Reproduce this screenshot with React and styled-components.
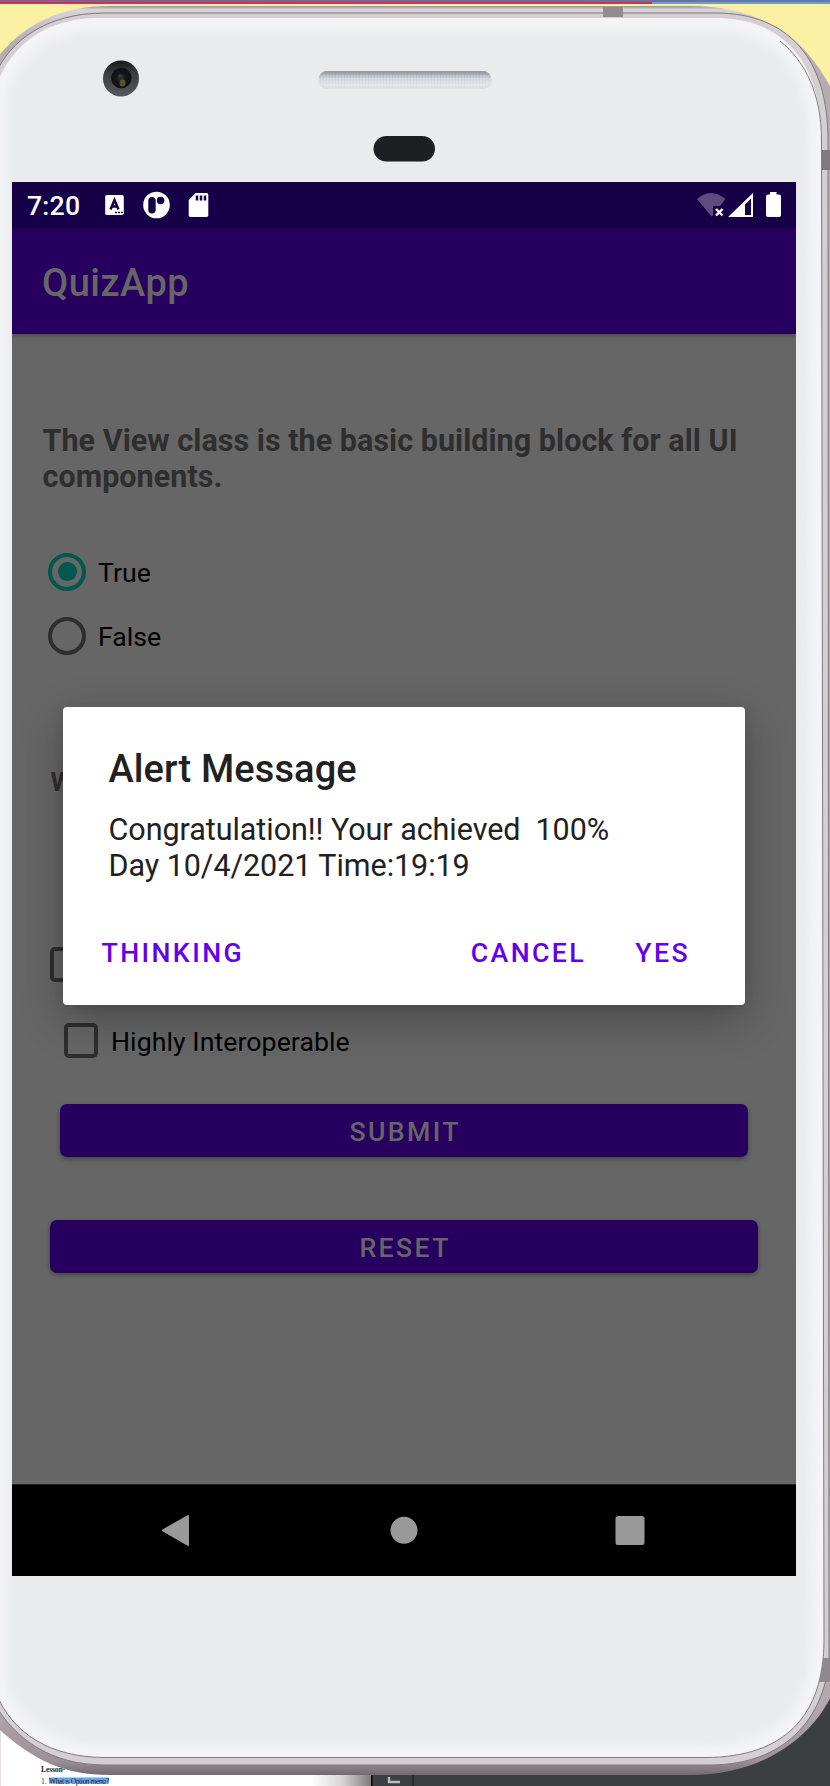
import React from "react";
import styled, { createGlobalStyle } from "styled-components";

const c = {
  purple: "#27005f",
  status: "#160048",
  dim: "#666666",
  hint: "#2e2e2e",
  teal: "#00584f",
  accent: "#6200ee",
  nav: "#999999",
};

const GlobalStyle = createGlobalStyle`
  * { box-sizing: border-box; }
  html, body { margin: 0; padding: 0; }
  body { width: 830px; height: 1786px; overflow: hidden; font-family: Roboto, "Liberation Sans", sans-serif; }
`;

const Stage = styled.main`
  position: relative;
  width: 830px;
  height: 1786px;
  overflow: hidden;
  padding: 182px 34px 210px 12px;
  background: #fcf1a3;
`;

const FrameArt = styled.svg`
  position: absolute;
  inset: 0;
  display: block;
`;

const Screen = styled.section`
  position: relative;
  display: flex;
  flex-direction: column;
  width: 784px;
  height: 1394px;
  overflow: hidden;
  background: ${c.dim};
`;

const StatusBar = styled.header`
  display: flex;
  align-items: center;
  height: 46px;
  padding: 0 15px 0 15px;
  background: ${c.status};
  color: #fff;
`;

const Clock = styled.span`
  width: 78px;
  padding-top: 1px;
  font-size: 26.7px;
  line-height: 32px;
  font-weight: 500;
  letter-spacing: 0.2px;
`;

const StatusIcons = styled.svg`
  display: block;
  margin-left: ${(p) => p.$push || "0"};
`;

const AppBar = styled.div`
  display: flex;
  align-items: center;
  flex: none;
  height: 106px;
  padding: 4px 30px 0;
  background: ${c.purple};
  color: ${c.dim};
  font-size: 38px;
  font-weight: 500;
  letter-spacing: 0.5px;
  box-shadow: 0 1px 5px rgba(0, 0, 0, 0.35);
`;

const Content = styled.div`
  flex: 1;
  display: flex;
  flex-direction: column;
  align-items: flex-start;
  padding-top: 88.5px;
`;

const Question = styled.p`
  margin: 0 0 0 ${(p) => p.$left}px;
  color: ${c.hint};
  font-size: ${(p) => p.$size}px;
  line-height: 36px;
  font-weight: 700;
  letter-spacing: 0.04px;
  white-space: pre-line;
`;

const RadioGroup = styled.div`
  display: flex;
  flex-direction: column;
  margin: 45px 0 0 36px;
`;

const Option = styled.label`
  display: flex;
  align-items: center;
  gap: ${(p) => p.$gap || 12}px;
  height: 64px;
  color: #000;
  font-size: 26.7px;
`;

const OptionText = styled.span`
  padding-top: 3px;
  letter-spacing: ${(p) => p.$spacing || 0}px;
`;

const RadioDot = styled.span`
  display: grid;
  place-items: center;
  width: 38px;
  height: 38px;
  border: 4px solid ${(p) => (p.$on ? c.teal : c.hint)};
  border-radius: 50%;

  &::after {
    content: "";
    width: 19px;
    height: 19px;
    border-radius: 50%;
    background: ${(p) => (p.$on ? c.teal : "transparent")};
  }
`;

const HiddenQuestion = styled.div`
  margin-top: 96px;
`;

const CheckList = styled.div`
  display: flex;
  flex-direction: column;
  margin-top: 133px;
  gap: 12px;
`;

const CheckRow = styled(Option)`
  margin-left: ${(p) => p.$left}px;
`;

const CheckBox = styled.span`
  width: 34.5px;
  height: 34.5px;
  border: 4px solid ${c.hint};
  border-radius: 5px;
`;

const Button = styled.button`
  display: block;
  width: ${(p) => p.$width}px;
  height: 53px;
  margin: ${(p) => p.$top}px 0 0 ${(p) => p.$left}px;
  padding: 4px 0 0 2.4px;
  border: 0;
  border-radius: 7px;
  background: ${c.purple};
  box-shadow: 0 2px 5px rgba(0, 0, 0, 0.35);
  color: ${c.dim};
  font: 500 26.7px Roboto, sans-serif;
  letter-spacing: 2.38px;
`;

const NavBar = styled.nav`
  flex: none;
  height: 92px;
  background: #000;
  border-top: 1px solid #222;
`;

const Dialog = styled.div`
  position: absolute;
  top: 525px;
  left: 50.5px;
  width: 682.5px;
  height: 298px;
  display: flex;
  flex-direction: column;
  padding: 40px 46px 0;
  border-radius: 4px;
  background: #fff;
  color: #212121;
  box-shadow: 0 14px 44px rgba(0, 0, 0, 0.28), 0 2px 10px rgba(0, 0, 0, 0.1);
`;

const DialogTitle = styled.h2`
  margin: 0;
  font-size: 38px;
  line-height: 45px;
  font-weight: 500;
  letter-spacing: 0.12px;
`;

const DialogText = styled.p`
  margin: 20px 0 0;
  font-size: 30.5px;
  line-height: 36px;
  letter-spacing: -0.05px;
  white-space: pre;
`;

const Actions = styled.div`
  display: flex;
  gap: 49px;
  margin: 53px 9px 0 -7px;
`;

const Action = styled.button`
  margin: 0 ${(p) => (p.$first ? "auto" : "0")} 0 0;
  padding: 0;
  border: 0;
  background: none;
  color: ${c.accent};
  font: 500 26.7px/32px Roboto, sans-serif;
  letter-spacing: 2.42px;
`;

const PaperText = styled.text`
  font-family: "Liberation Serif", serif;
  font-size: 7.6px;
  font-weight: ${(p) => p.$weight || 400};
`;

const outer =
  "M-20 84 C6 36 46 6 110 6 H690 C760 6 805 35 834 94 V1690 C815 1735 765 1775 690 1775 H110 C55 1775 25 1755 -20 1712 Z";
const rim =
  "M-4 73 C10 42 45 13 105 13 H715 C790 13 828 60 828 140 L829 1660 C824 1718 785 1765 710 1765 H105 C50 1765 15 1738 -4 1706 Z";
const face =
  "M-4 86 C12 45 45 18 100 18 H715 C785 18 821.5 65 821.5 140 L824 1640 C824 1715 785 1757.5 705 1757.5 H105 C50 1757.5 12 1733 -4 1693 Z";

function PhoneFrame() {
  return (
    <FrameArt width="830" height="1786" viewBox="0 0 830 1786" aria-hidden="true">
      <defs>
        <linearGradient id="metal" x1="0" y1="0" x2="0" y2="1">
          <stop offset="0" stopColor="#98929a" />
          <stop offset="0.002" stopColor="#d8d4d7" />
          <stop offset="0.02" stopColor="#b5adb0" />
          <stop offset="0.96" stopColor="#b3a9ad" />
          <stop offset="0.992" stopColor="#9b9196" />
          <stop offset="1" stopColor="#736a70" />
        </linearGradient>
        <linearGradient id="mesh" x1="0" y1="0" x2="0" y2="1">
          <stop offset="0" stopColor="#8d939b" />
          <stop offset="0.25" stopColor="#aab0b7" />
          <stop offset="0.5" stopColor="#cfd3d9" />
          <stop offset="1" stopColor="#e1e4e9" />
        </linearGradient>
        <linearGradient id="topline" x1="0" x2="1">
          <stop offset="0" stopColor="#8b5c87" />
          <stop offset="0.7" stopColor="#73689c" />
          <stop offset="1" stopColor="#617caf" />
        </linearGradient>
        <linearGradient id="paper" x1="0" x2="1">
          <stop offset="0" stopColor="#fff" />
          <stop offset="0.5" stopColor="#d8d6d6" />
          <stop offset="1" stopColor="#807c7d" />
        </linearGradient>
        <radialGradient id="lens">
          <stop offset="0" stopColor="#39371c" />
          <stop offset="0.5" stopColor="#14151b" />
          <stop offset="1" stopColor="#101112" />
        </radialGradient>
        <linearGradient id="camera" x1="0" y1="0" x2="0" y2="1">
          <stop offset="0" stopColor="#17191b" />
          <stop offset="0.35" stopColor="#3b3c3f" />
          <stop offset="1" stopColor="#58595c" />
        </linearGradient>
        <pattern id="dots" width="3" height="3" patternUnits="userSpaceOnUse">
          <path d="M0 0H1V3" fill="none" stroke="#fff" strokeOpacity="0.25" />
        </pattern>
        <filter id="glow" x="-10%" y="-10%" width="120%" height="120%">
          <feGaussianBlur stdDeviation="5" />
        </filter>
        <clipPath id="faceClip"><path d={face} /></clipPath>
      </defs>

      <rect width="830" height="2" fill="url(#topline)" />
      <rect y="2" width="652" height="2" fill="#c93357" />
      <rect x="652" y="2" width="178" height="2" fill="#68a2cb" />
      <rect y="1690" width="372" height="96" fill="#fff" />
      <rect y="1732" width="1" height="54" fill="#e5dfe1" />
      <rect x="312" y="1774" width="59" height="12" fill="url(#paper)" />
      <rect x="371" y="1640" width="459" height="146" fill="#3b3f41" />
      <rect x="371" y="1774" width="1.5" height="12" fill="#050505" />
      <rect x="412" y="1774" width="2" height="12" fill="#2a2c2d" />
      <path d="M389 1777V1782H400" fill="none" stroke="#b9bbbc" strokeWidth="2.4" />
      <rect x="49" y="1777.5" width="60" height="6" fill="#68a3e8" />
      <PaperText x="41" y="1772" $weight="700" textLength="24" fill="#222">Lesson-</PaperText>
      <PaperText x="41" y="1783.5" fill="#333">1.</PaperText>
      <PaperText x="49" y="1783.5" textLength="60" fill="#142b4d">What is Option menu?</PaperText>

      <path d={outer} fill="url(#metal)" />
      <path d={rim} fill="#d5cfd1" stroke="#817a7e" strokeWidth="1" />
      <rect x="603" y="7" width="20" height="10" fill="#938b90" />
      <rect x="822" y="150" width="8" height="20" fill="#81797e" />
      <path d="M823 1658H830V1682H818Z" fill="#91888d" />
      <path d={face} fill="#e9ebec" />
      <g clipPath="url(#faceClip)">
        <path d={face} fill="none" stroke="#f4f4f6" strokeWidth="25" filter="url(#glow)" />
      </g>
      <path d="M780 41C806 62 821.5 95 821.5 140L824 1640C824 1715 785 1757.5 705 1757.5H105C50 1757.5 12 1733 -4 1693" fill="none" stroke="#7e7b80" />

      <circle cx="121" cy="78.5" r="18" fill="url(#camera)" />
      <circle cx="121.3" cy="78" r="10.3" fill="url(#lens)" />
      <circle cx="120" cy="76" r="2" fill="#34335a" />
      <ellipse cx="122.5" cy="83" rx="3" ry="3.5" fill="#6c6a35" opacity="0.75" />
      <rect x="318" y="72" width="174" height="17" rx="8.5" fill="#dddfe3" />
      <rect x="319" y="71" width="172" height="15" rx="7.5" fill="url(#mesh)" />
      <rect x="319" y="75" width="172" height="11" rx="5.5" fill="url(#dots)" />
      <rect x="373.5" y="136" width="61.5" height="25.5" rx="12.75" fill="#1d1f22" />
    </FrameArt>
  );
}

function NotificationIcons() {
  return (
    <StatusIcons width="106" height="30" viewBox="105 190 106 30">
      <rect x="105.2" y="195" width="18.6" height="20" rx="1.8" fill="#fff" />
      <path d="M110.500 209.500L114.500 200L118.500 209.500M112.300 206.500H116.800" fill="none" stroke={c.status} strokeWidth="2.500" />
      <path d="M115 212.500H117M118 212.500H120M121 212.500H123" stroke={c.status} strokeWidth="1.700" />
      <circle cx="156.500" cy="205" r="13.300" fill="#fff" />
      <rect x="148.300" y="197" width="7.400" height="16.500" rx="3.700" fill={c.status} />
      <circle cx="160.600" cy="200.500" r="3.800" fill={c.status} />
      <path fill="#fff" d="M195.500 193H206.500a1.800 1.800 0 0 1 1.800 1.800V215.200a1.800 1.800 0 0 1-1.800 1.800H190.500a1.800 1.800 0 0 1-1.800-1.800V200Z" />
      <path d="M197 195.500V200.500M201 195.500V200.500M205 195.500V200.500" stroke={c.status} strokeWidth="2.500" />
    </StatusIcons>
  );
}

function SystemIcons() {
  return (
    <StatusIcons $push="auto" width="86" height="30" viewBox="695 190 86 30">
      <path fill="#5e4c80" d="M697 199Q711 187 725.500 199L720 206H713V215.500L711.500 216.500Z" />
      <path d="M716 209L722.500 215.500M722.500 209L716 215.500" stroke="#fff" strokeWidth="2.400" />
      <path fillRule="evenodd" fill="#fff" d="M753 193V217H728ZM751 198.500L745 204.500V215H751Z" />
      <path fill="#fff" d="M770 192H776.500V194.500H779a2 2 0 0 1 2 2V215a2 2 0 0 1-2 2H768a2 2 0 0 1-2-2V196.500a2 2 0 0 1 2-2H770Z" />
    </StatusIcons>
  );
}

export default function App() {
  return (
    <>
      <GlobalStyle />
      <Stage>
        <PhoneFrame />
        <Screen>
          <StatusBar>
            <Clock>7:20</Clock>
            <NotificationIcons />
            <SystemIcons />
          </StatusBar>
          <AppBar>QuizApp</AppBar>
          <Content>
            <Question $left={30.5} $size={30.5}>
              {"The View class is the basic building block for all UI\ncomponents."}
            </Question>
            <RadioGroup>
              <Option><RadioDot $on /><OptionText>True</OptionText></Option>
              <Option><RadioDot /><OptionText>False</OptionText></Option>
            </RadioGroup>
            <HiddenQuestion>
              <Question $left={38.5} $size={26.7}>W</Question>
            </HiddenQuestion>
            <CheckList>
              <CheckRow $left={38}><CheckBox /></CheckRow>
              <CheckRow $left={51.5} $gap={13}>
                <CheckBox /><OptionText $spacing={0.06}>Highly Interoperable</OptionText>
              </CheckRow>
            </CheckList>
            <Button $left={48} $width={688} $top={31}>SUBMIT</Button>
            <Button $left={38} $width={708} $top={63}>RESET</Button>
          </Content>
          <NavBar>
            <svg width="784" height="91" viewBox="12 1485 784 91" aria-hidden="true">
              <path d="M163 1530.300L188 1516V1545Z" fill={c.nav} stroke={c.nav} strokeWidth="2" strokeLinejoin="round" />
              <circle cx="404" cy="1530.300" r="13.500" fill={c.nav} />
              <rect x="615.500" y="1516" width="29" height="29" rx="2.500" fill={c.nav} />
            </svg>
          </NavBar>
          <Dialog role="dialog">
            <DialogTitle>Alert Message</DialogTitle>
            <DialogText>{"Congratulation!! Your achieved  100%\nDay 10/4/2021 Time:19:19"}</DialogText>
            <Actions>
              <Action $first>THINKING</Action>
              <Action>CANCEL</Action>
              <Action>YES</Action>
            </Actions>
          </Dialog>
        </Screen>
      </Stage>
    </>
  );
}
